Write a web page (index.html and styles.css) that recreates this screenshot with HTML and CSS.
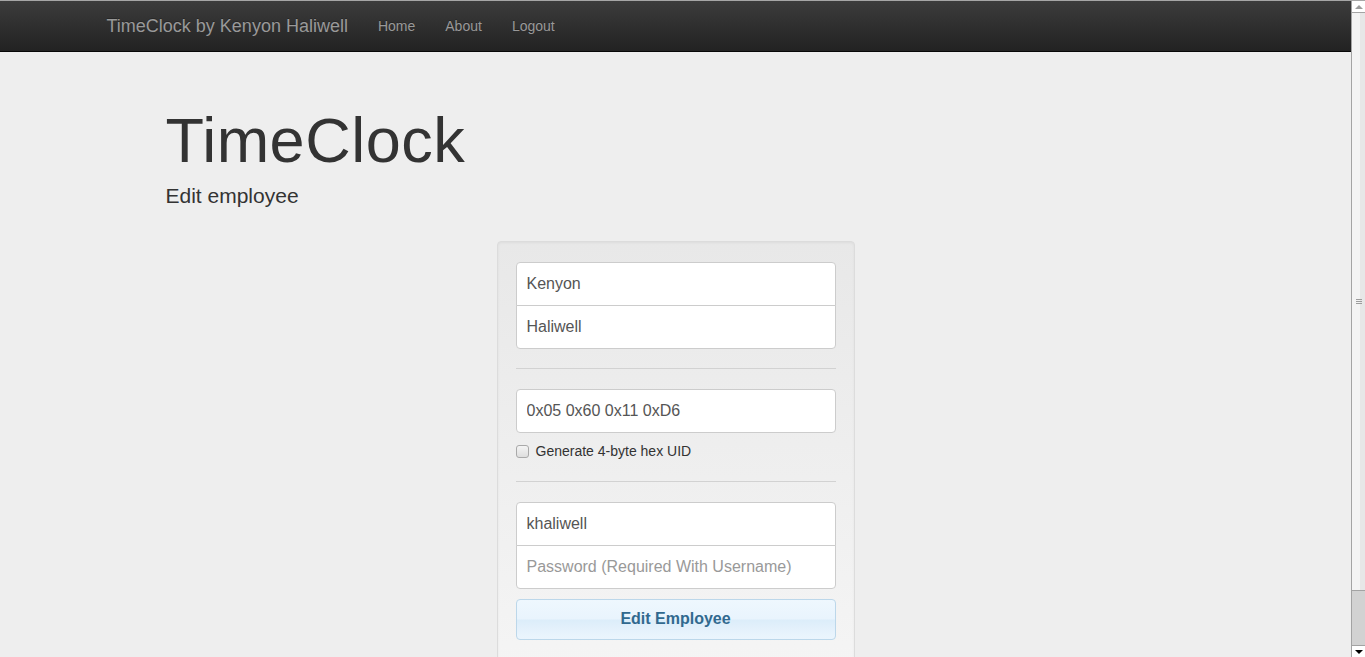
FILE: index.html
```html
<!DOCTYPE html>
<html lang="en">
<head>
<meta charset="utf-8">
<title>TimeClock - Edit employee</title>
<link rel="stylesheet" href="styles.css">
</head>
<body>
<nav class="navbar">
  <div class="container nav-inner">
    <a class="brand" href="#">TimeClock by Kenyon Haliwell</a>
    <ul class="nav-links">
      <li><a href="#">Home</a></li>
      <li><a href="#">About</a></li>
      <li><a href="#">Logout</a></li>
    </ul>
  </div>
</nav>
<main class="container">
  <section class="jumbotron">
    <h1>TimeClock</h1>
    <p>Edit employee</p>
  </section>
  <form class="well form-edit">
    <input class="field field-top" type="text" value="Kenyon">
    <input class="field field-bottom" type="text" value="Haliwell">
    <hr class="divider">
    <input class="field" type="text" value="0x05 0x60 0x11 0xD6">
    <label class="check"><input type="checkbox" class="checkbox"><span>Generate 4-byte hex UID</span></label>
    <hr class="divider divider-2">
    <input class="field field-top" type="text" value="khaliwell">
    <input class="field field-bottom" type="password" placeholder="Password (Required With Username)">
    <button class="btn-submit" type="button">Edit Employee</button>
  </form>
</main>
<div class="fake-scrollbar" aria-hidden="true">
  <div class="sb-btn sb-up"><span class="tri tri-up"></span></div>
  <div class="sb-thumb"><span class="grip"></span><span class="grip"></span><span class="grip"></span></div>
  <div class="sb-track"></div>
  <div class="sb-btn sb-down"><span class="tri tri-down"></span></div>
</div>
</body>
</html>
```

FILE: styles.css
```css
html {
  background: #eeeeee;
}
body {
  margin: 0;
  padding: 0 14px 40px 0;
  background: #eeeeee;
  font-family: "Liberation Sans", Arial, Helvetica, sans-serif;
  font-size: 14px;
  line-height: 1.428571;
  color: #333333;
}

.container {
  width: 1170px;
  margin: 0 auto;
  padding: 0 15px;
  box-sizing: border-box;
}

/* Navbar */
.navbar {
  border-top: 1px solid #a6a6a6;
  border-bottom: 1px solid #080808;
  height: 50px;
  background: linear-gradient(to bottom, #3c3c3c 0%, #222222 100%);
}
.nav-inner {
  display: flex;
  align-items: stretch;
  height: 50px;
}
.brand {
  display: block;
  margin-left: -14px;
  padding: 15px;
  font-size: 18px;
  line-height: 20px;
  color: #999999;
  text-decoration: none;
  text-shadow: 0 -1px 0 rgba(0, 0, 0, 0.25);
}
.nav-links {
  display: flex;
  list-style: none;
  margin: 0;
  padding: 0;
}
.nav-links a {
  display: block;
  padding: 15px;
  font-size: 14px;
  line-height: 20px;
  color: #999999;
  text-decoration: none;
  text-shadow: 0 -1px 0 rgba(0, 0, 0, 0.25);
}

/* Jumbotron */
.jumbotron {
  padding: 54px 60px 0;
  margin-bottom: 30px;
}
.jumbotron h1 {
  margin: 0;
  font-size: 63px;
  line-height: 69px;
  font-weight: 400;
  letter-spacing: 0.5px;
  color: #333333;
}
.jumbotron p {
  margin: 6px 0 0;
  font-size: 21px;
  line-height: 30px;
  font-weight: 300;
  color: #333333;
}

/* Well + form */
.well {
  width: 358px;
  box-sizing: border-box;
  margin: 0 auto;
  padding: 20px 18px 39px;
  border: 1px solid #dcdcdc;
  border-radius: 4px;
  background: linear-gradient(to bottom, #e8e8e8 0%, #f5f5f5 100%);
  box-shadow: inset 0 1px 3px rgba(0, 0, 0, 0.05), 0 1px 0 rgba(255, 255, 255, 0.1);
  display: flex;
  flex-direction: column;
}
.field {
  display: block;
  width: 320px;
  height: 44px;
  box-sizing: border-box;
  margin: 0;
  padding: 10px;
  border: 1px solid #cccccc;
  border-radius: 4px;
  background: #ffffff;
  font-family: "Liberation Sans", Arial, Helvetica, sans-serif;
  font-size: 16px;
  line-height: 22px;
  color: #555555;
  outline: none;
}
.field::placeholder {
  color: #999999;
}
.field-top {
  border-bottom-left-radius: 0;
  border-bottom-right-radius: 0;
  margin-bottom: -1px;
}
.field-bottom {
  border-top-left-radius: 0;
  border-top-right-radius: 0;
}
.divider {
  width: 100%;
  margin: 19px 0 20px;
  border: 0;
  border-top: 1px solid #d2d2d2;
  height: 0;
}
.divider-2 {
  margin-top: 23px;
}
.check {
  display: flex;
  align-items: center;
  gap: 7px;
  margin-top: 11px;
  height: 14px;
  font-size: 14px;
  line-height: 20px;
  color: #333333;
}
.checkbox {
  -webkit-appearance: none;
  appearance: none;
  width: 13px;
  height: 13px;
  margin: 0;
  border: 1px solid #a9a9a9;
  border-radius: 3px;
  background: linear-gradient(to bottom, #f4f4f4, #dedede);
  box-sizing: border-box;
}
.btn-submit {
  display: block;
  width: 320px;
  margin-top: 10px;
  padding: 7px 10px 9px;
  border: 1px solid #bcd7ea;
  border-radius: 4px;
  background: linear-gradient(to bottom, #eef7fe 0%, #e9f4fd 48%, #dcedfa 52%, #e6f2fc 80%, #ebf5fd 100%);
  font-family: "Liberation Sans", Arial, Helvetica, sans-serif;
  font-size: 16px;
  font-weight: 700;
  line-height: 23px;
  color: #31698f;
  cursor: pointer;
}

/* Decorative browser scrollbar overlay */
.fake-scrollbar {
  position: fixed;
  top: 0;
  right: 0;
  bottom: 0;
  width: 14px;
  box-sizing: border-box;
  border-top: 1px solid #a6a6a6;
  border-left: 1px solid #a3a3a3;
  display: flex;
  flex-direction: column;
  background: #d2d2d2;
}
.sb-btn {
  height: 11px;
  flex: none;
  background: #ffffff;
  display: flex;
  align-items: center;
  justify-content: center;
}
.sb-up {
  border-bottom: 1px solid #a3a3a3;
}
.sb-down {
  border-top: 1px solid #a3a3a3;
}
.tri {
  width: 0;
  height: 0;
  border-left: 4px solid transparent;
  border-right: 4px solid transparent;
}
.tri-up {
  border-bottom: 4px solid #9c9c9c;
}
.tri-down {
  border-top: 4px solid #000000;
}
.sb-thumb {
  height: 577px;
  flex: none;
  border-bottom: 1px solid #a3a3a3;
  background: linear-gradient(to right, #f3f3f3 60%, #e7e7e7 60%);
  display: flex;
  flex-direction: column;
  align-items: center;
  justify-content: center;
  gap: 1px;
}
.grip {
  width: 6px;
  height: 1px;
  background: #9c9c9c;
}
.sb-track {
  flex: 1;
}
```
